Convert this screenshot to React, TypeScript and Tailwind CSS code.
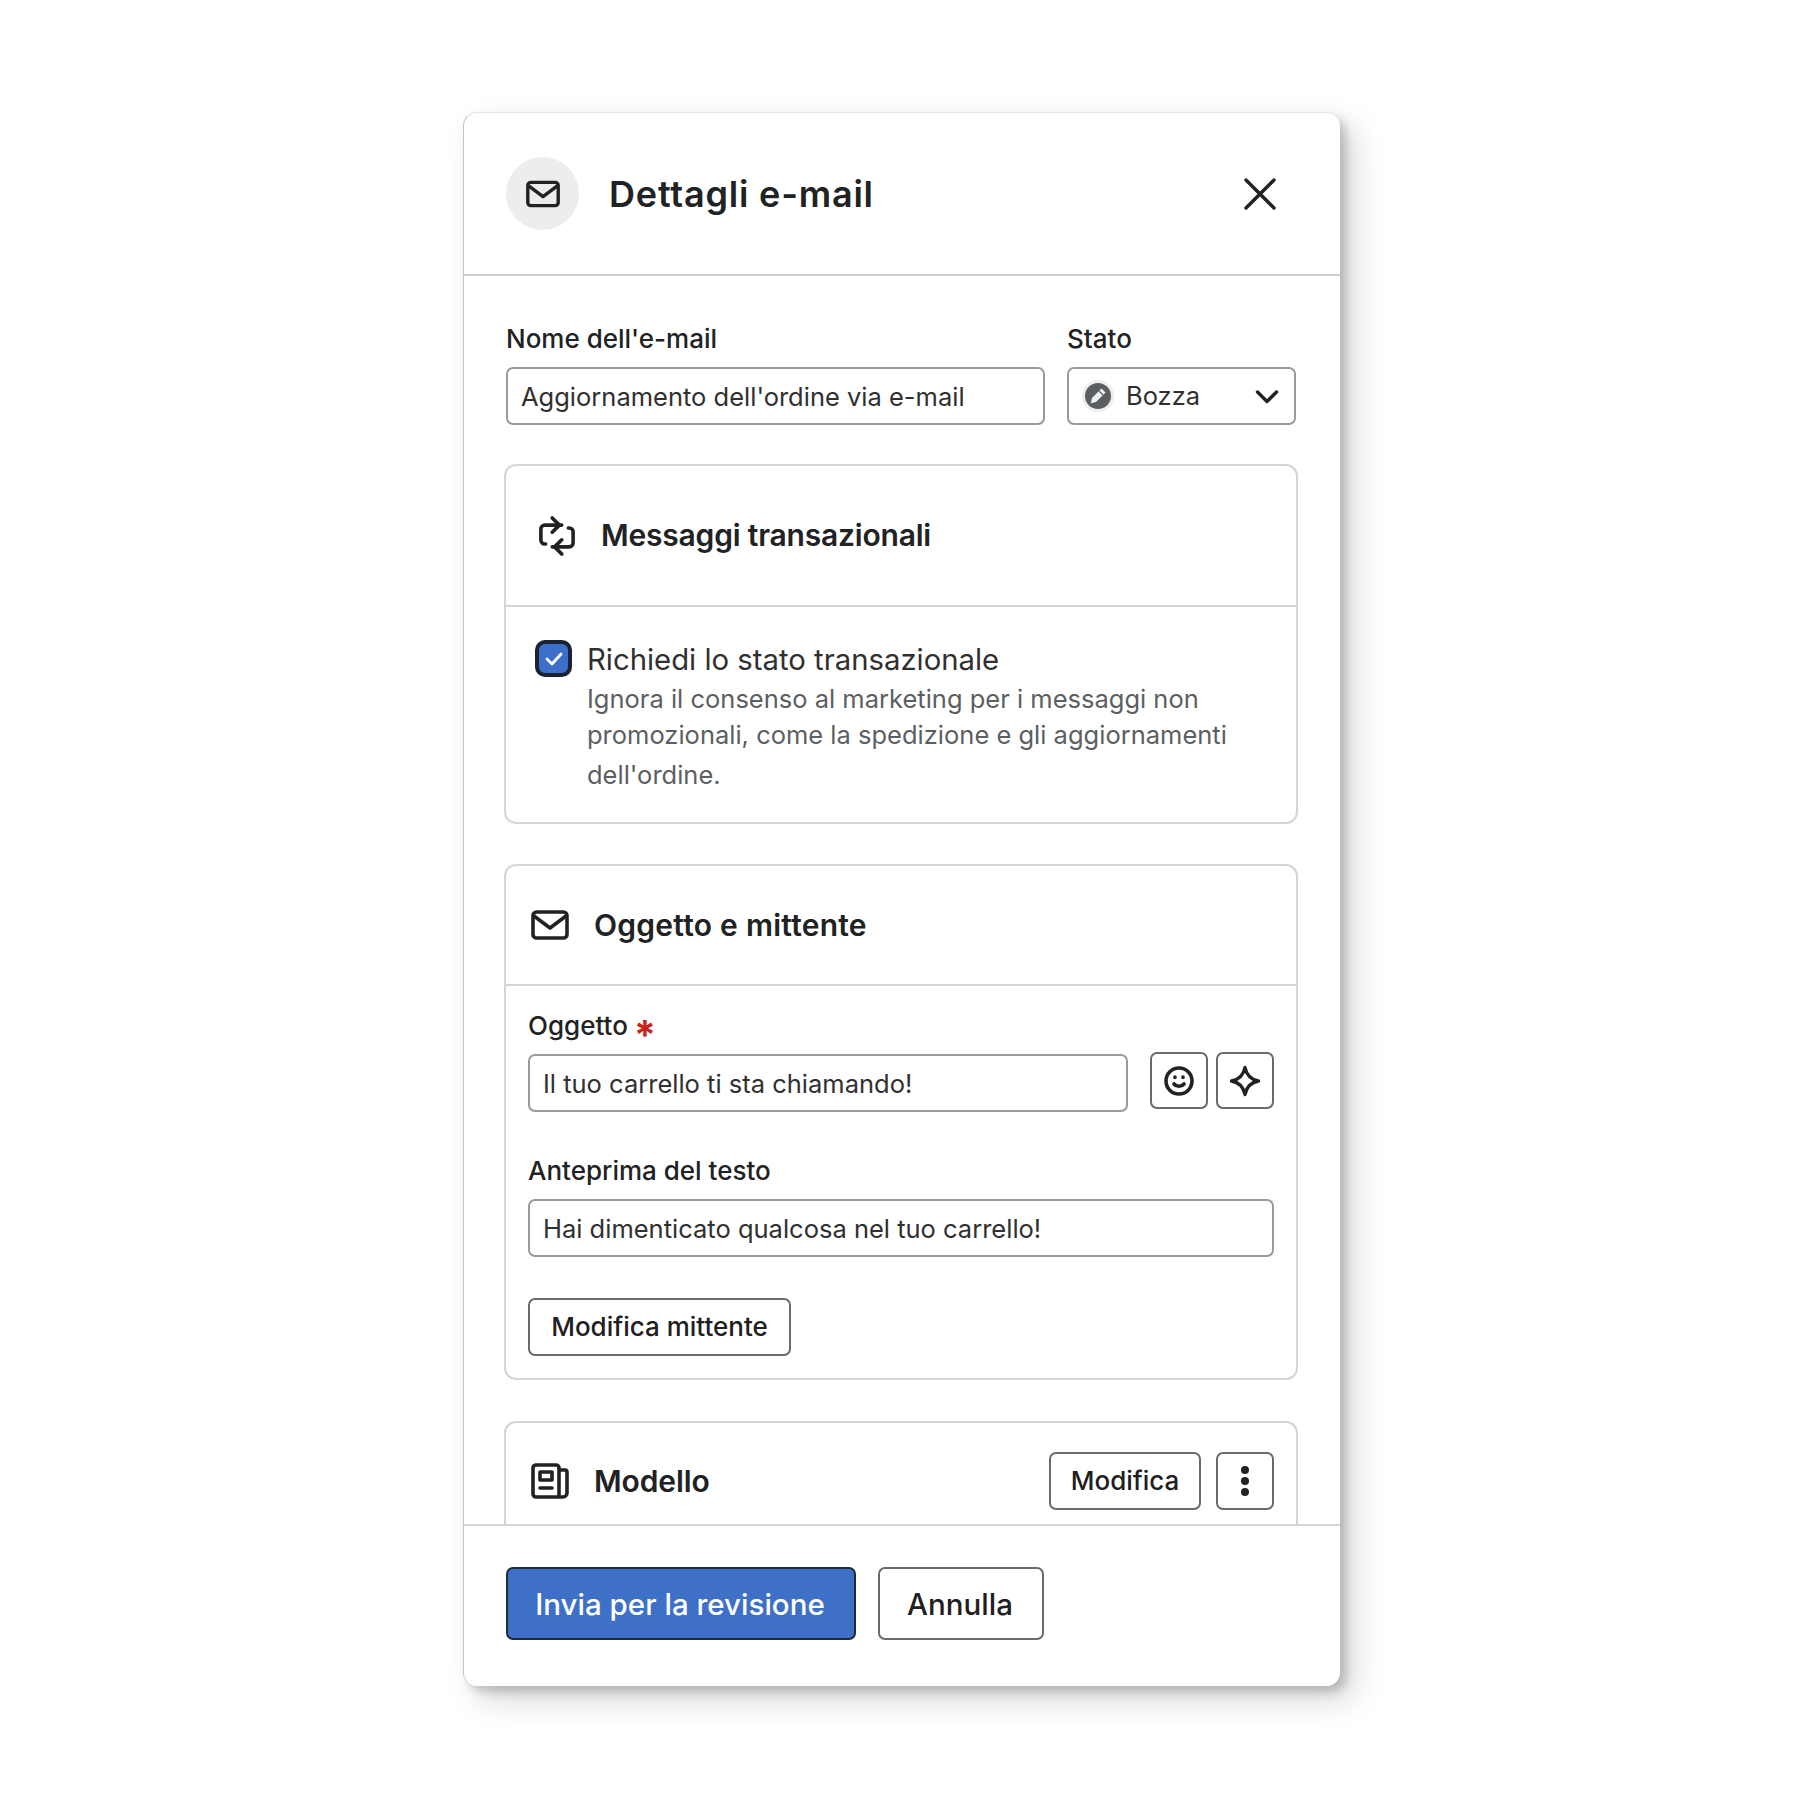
import type { ReactNode } from "react";

const inputCls =
  "flex h-[58px] items-center rounded-[7px] border-2 border-[#9a9a9a] bg-white px-[13px] pt-[2px] text-[25.5px] text-[#303030]";
const outlineBtn =
  "flex items-center justify-center rounded-[7px] border-2 border-[#6b6b6b] bg-white text-[#202020]";
const labelCls = "text-[26px] font-[450] leading-[36px] text-[#202223]";

function MailIcon({ size, sw }: { size: number; sw: number }) {
  return (
    <svg width={size} height={size} viewBox="0 0 38 38" fill="none" stroke="#202223" strokeWidth={sw} strokeLinejoin="round" strokeLinecap="round">
      <rect x="2" y="6" width="34" height="26" rx="3.5" />
      <path d="M3 10l16 12 16-12" />
    </svg>
  );
}

function Section({ className, children }: { className?: string; children: ReactNode }) {
  return <section className={`rounded-[12px] border-2 border-[#d2d4d6] ${className ?? ""}`}>{children}</section>;
}

export default function App() {
  return (
    <div className="min-h-[1800px] bg-white pl-[463px] pt-[112px] font-['Inter',sans-serif] text-[#202223]">
      <div className="flex h-[1574px] w-[877px] flex-col overflow-hidden rounded-[14px] border-l border-t border-l-[#c4c4c4] border-t-[#e6e6e6] bg-white shadow-[6px_6px_10px_rgba(0,0,0,0.18),14px_14px_32px_rgba(0,0,0,0.16)]">
        {/* Header */}
        <header className="flex h-[163px] shrink-0 items-center border-b-2 border-[#cfd1d3] pl-[42px] pr-[63px]">
          <div className="flex h-[73px] w-[73px] items-center justify-center rounded-full bg-[#ebedee]">
            <MailIcon size={34} sw={3.8} />
          </div>
          <h1 className="ml-[30px] flex-1 text-[36px] font-semibold tracking-[0.8px] text-[#202223]">Dettagli e-mail</h1>
          <svg width="34" height="34" viewBox="0 0 34 34" fill="none" stroke="#202223" strokeWidth="3.4" strokeLinecap="round">
            <path d="M3 3l28 28M31 3L3 31" />
          </svg>
        </header>

        {/* Body */}
        <div className="min-h-0 flex-1 overflow-hidden pl-[40px] pr-[42px] pt-[45px]">
          <div className="flex gap-[22px] pl-[2px]">
            <div className="w-[539px]">
              <label className={`block ${labelCls}`}>Nome dell'e-mail</label>
              <div className={`${inputCls} mt-[10px]`}>Aggiornamento dell'ordine via e-mail</div>
            </div>
            <div className="w-[229px]">
              <label className={`block ${labelCls}`}>Stato</label>
              <div className={`${inputCls} mt-[10px] justify-between pl-[13px] pr-[15px]`}>
                <span className="flex items-center gap-[12px] pb-[2px]">
                  <svg width="32" height="32" viewBox="0 0 32 32">
                    <circle cx="16" cy="16" r="16" fill="#eceded" />
                    <circle cx="16" cy="16" r="13" fill="#5c5f62" />
                    <path d="M19.500 8.500l4 4-9.500 9.500-5.200 1.200 1.200-5.200z" fill="#f1f2f3" />
                    <path d="M17 11l4 4" stroke="#5c5f62" strokeWidth="1.200" />
                  </svg>
                  Bozza
                </span>
                <svg width="24" height="16" viewBox="0 0 24 16" fill="none" stroke="#202223" strokeWidth="3.400" strokeLinecap="round" strokeLinejoin="round">
                  <path d="M2.500 3l9.500 9.500L21.500 3" />
                </svg>
              </div>
            </div>
          </div>

          {/* Messaggi transazionali */}
          <Section className="mt-[39px] h-[360px]">
            <div className="flex h-[141px] items-center border-b-2 border-[#d2d4d6] pl-[33px]">
              <svg width="36" height="40" viewBox="0 0 38 42" fill="none" stroke="#202223" strokeWidth="3.800" strokeLinecap="round" strokeLinejoin="round">
                <path d="M24 9.500H6a4 4 0 0 0-4 4v12a4 4 0 0 0 4 4h1" />
                <path d="M14 2l7.500 7.500L14 17" />
                <path d="M14 32.500h18a4 4 0 0 0 4-4v-12a4 4 0 0 0-4-4h-1" />
                <path d="M24 25l-7.500 7.500L24 40" />
              </svg>
              <h2 className="ml-[26px] text-[30px] font-[570] tracking-[-0.2px] text-[#202223]">Messaggi transazionali</h2>
            </div>
            <div className="flex pl-[29px] pt-[32px]">
              <div className="mt-px flex h-[37px] w-[37px] shrink-0 items-center justify-center rounded-[10px] border-[4px] border-[#1c2330] bg-[#3b6fc9]">
                <svg width="20" height="16" viewBox="0 0 20 16" fill="none" stroke="#fff" strokeWidth="2.800" strokeLinecap="round" strokeLinejoin="round">
                  <path d="M3 8l5 5 9-10" />
                </svg>
              </div>
              <div className="ml-[15px] pt-[2px]">
                <p className="text-[29.3px] leading-[38px] text-[#303030]">Richiedi lo stato transazionale</p>
                <div className="mt-[2px] text-[25.5px] leading-[36px] text-[#5c5f62]">
                  <p>Ignora il consenso al marketing per i messaggi non</p>
                  <p>promozionali, come la spedizione e gli aggiornamenti</p>
                  <p className="mt-[4px]">dell'ordine.</p>
                </div>
              </div>
            </div>
          </Section>

          {/* Oggetto e mittente */}
          <Section className="mt-[40px] h-[516px]">
            <div className="flex h-[120px] items-center border-b-2 border-[#d2d4d6] pl-[25px]">
              <svg width="38" height="30" viewBox="0 0 38 30" fill="none" stroke="#202223" strokeWidth="3.600" strokeLinecap="round" strokeLinejoin="round">
                <rect x="2" y="2" width="34" height="26" rx="3.500" />
                <path d="M3 6l16 12L35 6" />
              </svg>
              <h2 className="ml-[25px] text-[30px] font-[570] tracking-[0.25px] text-[#202223]">Oggetto e mittente</h2>
            </div>
            <div className="px-[22px] pt-[22px]">
              <label className={`flex h-[36px] items-center ${labelCls}`}>
                Oggetto
                <span className="ml-[6px] translate-y-[9px] text-[40px] font-bold leading-[36px] text-[#c4281c]">*</span>
              </label>
              <div className="mt-[8px] flex items-start">
                <div className={`${inputCls} mt-[2px] w-[601px]`}>Il tuo carrello ti sta chiamando!</div>
                <button className={`${outlineBtn} ml-[22px] h-[57px] w-[58px]`}>
                  <svg width="30" height="30" viewBox="0 0 30 30" fill="none" stroke="#202223" strokeWidth="3.600" strokeLinecap="round">
                    <circle cx="15" cy="15" r="13" />
                    <path d="M10 18c2.500 3 7.500 3 10 0" />
                    <path d="M11 11v.5M19 11v.5" strokeWidth="3.600" />
                  </svg>
                </button>
                <button className={`${outlineBtn} ml-[8px] h-[57px] w-[58px]`}>
                  <svg width="32" height="32" viewBox="0 0 32 32" fill="none" stroke="#202223" strokeWidth="3.400" strokeLinejoin="round">
                    <path d="M16 2.500c1.500 7.500 5 12 13.500 13.500C21 17.500 17.500 22 16 29.500 14.500 22 11 17.500 2.500 16 11 14.500 14.500 10 16 2.500z" />
                  </svg>
                </button>
              </div>
              <label className={`mt-[41px] block ${labelCls}`}>Anteprima del testo</label>
              <div className={`${inputCls} mt-[10px] w-full`}>Hai dimenticato qualcosa nel tuo carrello!</div>
              <button className={`${outlineBtn} mt-[41px] h-[58px] w-[263px] pb-[2px] text-[26px] font-[450]`}>Modifica mittente</button>
            </div>
          </Section>

          {/* Modello */}
          <Section className="mt-[41px] h-[200px]">
            <div className="flex h-[116px] items-center pl-[25px] pr-[22px]">
              <svg width="38" height="36" viewBox="0 0 38 36" fill="none" stroke="#202223" strokeWidth="3.600" strokeLinecap="round" strokeLinejoin="round">
                <path d="M28 34H5a3 3 0 0 1-3-3V5a3 3 0 0 1 3-3h20a3 3 0 0 1 3 3v29h4a4 4 0 0 0 4-4V9a2 2 0 0 0-2-2h-6" />
                <rect x="9" y="9" width="12" height="8" />
                <path d="M9 25h12" />
              </svg>
              <h2 className="ml-[25px] flex-1 text-[30px] font-[570] tracking-[-0.1px] text-[#202223]">Modello</h2>
              <button className={`${outlineBtn} h-[58px] w-[152px] pb-[2px] text-[26px] font-[450]`}>Modifica</button>
              <button className={`${outlineBtn} ml-[15px] h-[58px] w-[58px]`}>
                <svg width="12" height="32" viewBox="0 0 12 32" fill="#202223">
                  <circle cx="6" cy="5" r="4" />
                  <circle cx="6" cy="16" r="4" />
                  <circle cx="6" cy="27" r="4" />
                </svg>
              </button>
            </div>
          </Section>
        </div>

        {/* Footer */}
        <footer className="relative z-10 flex h-[162px] shrink-0 gap-[22px] border-t-2 border-[#d2d4d6] bg-white pl-[42px] pt-[41px]">
          <button className="h-[73px] w-[350px] rounded-[7px] border-2 border-[#1f2a3d] bg-[#3d70c6] pr-[2px] pt-[2px] text-[29.500px] font-[450] text-white">Invia per la revisione</button>
          <button className={`${outlineBtn} h-[73px] w-[166px] pr-[2px] pt-[2px] text-[29.500px] font-[450]`}>Annulla</button>
        </footer>
      </div>
    </div>
  );
}
